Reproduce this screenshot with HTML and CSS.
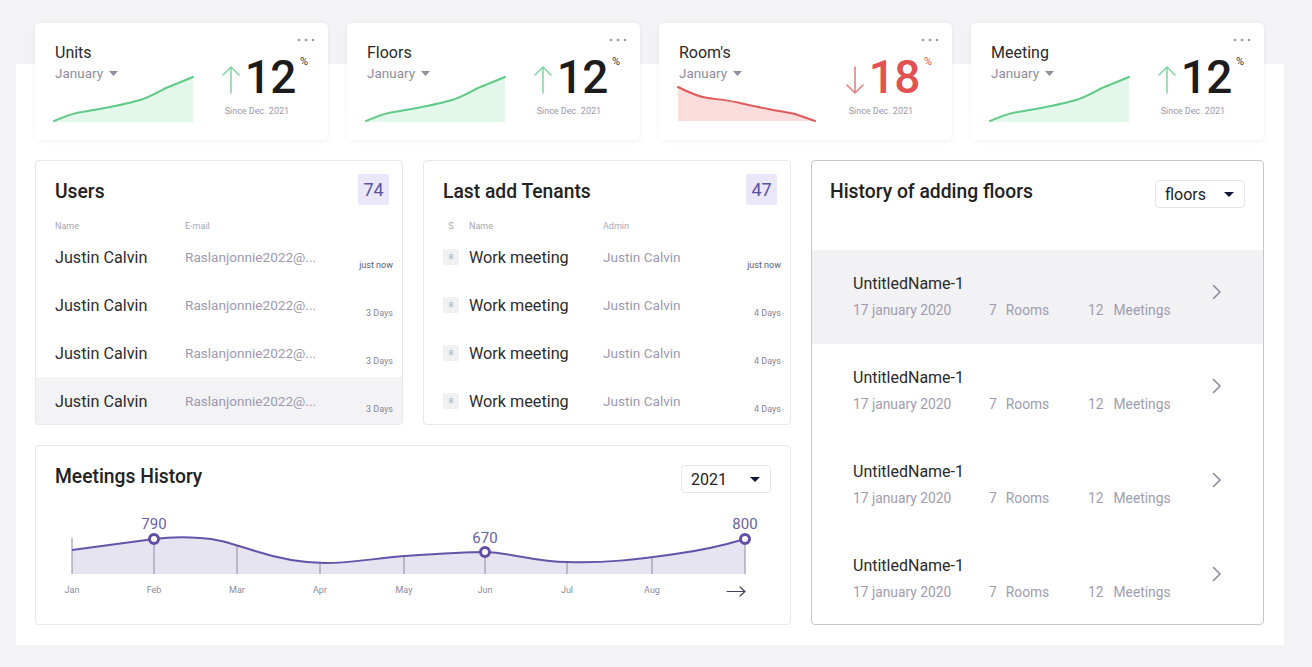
FILE: index.html
```html
<!DOCTYPE html>
<html lang="en">
<head>
<meta charset="utf-8">
<title>Dashboard</title>
<link rel="stylesheet" href="styles.css">
</head>
<body>
<div class="panel">
  <div class="stats">
    <div class="stat">
      <svg class="dots" width="18" height="4" viewBox="0 0 18 4"><circle cx="2" cy="2" r="1.3"/><circle cx="9" cy="2" r="1.3"/><circle cx="16" cy="2" r="1.3"/></svg>
      <div class="stat-left">
        <div class="stat-title">Units</div>
        <div class="stat-month">January <svg class="caret" width="9" height="5" viewBox="0 0 9 5"><path d="M0 0h9L4.5 5z"/></svg></div>
        <svg class="spark" width="139" height="45" viewBox="0 0 139 45"><path class="fill-g" d="M0,44 C10,40 18,36 28,35 C45,32 70,28 86,23 C96,20 104,15 112,11 L139,0 L139,45 L0,45 Z"/><path class="line-g" d="M0,44 C10,40 18,36 28,35 C45,32 70,28 86,23 C96,20 104,15 112,11 L139,0"/></svg>
      </div>
      <div class="stat-right">
        <div class="stat-value">
          <svg class="arrow up" width="18" height="28" viewBox="0 0 18 28"><path d="M9 27V1M1 9l8-8 8 8"/></svg>
          <span class="num">12</span><span class="pct">%</span>
        </div>
        <div class="since">Since Dec. 2021</div>
      </div>
    </div>
    <div class="stat">
      <svg class="dots" width="18" height="4" viewBox="0 0 18 4"><circle cx="2" cy="2" r="1.3"/><circle cx="9" cy="2" r="1.3"/><circle cx="16" cy="2" r="1.3"/></svg>
      <div class="stat-left">
        <div class="stat-title">Floors</div>
        <div class="stat-month">January <svg class="caret" width="9" height="5" viewBox="0 0 9 5"><path d="M0 0h9L4.5 5z"/></svg></div>
        <svg class="spark" width="139" height="45" viewBox="0 0 139 45"><path class="fill-g" d="M0,44 C10,40 18,36 28,35 C45,32 70,28 86,23 C96,20 104,15 112,11 L139,0 L139,45 L0,45 Z"/><path class="line-g" d="M0,44 C10,40 18,36 28,35 C45,32 70,28 86,23 C96,20 104,15 112,11 L139,0"/></svg>
      </div>
      <div class="stat-right">
        <div class="stat-value">
          <svg class="arrow up" width="18" height="28" viewBox="0 0 18 28"><path d="M9 27V1M1 9l8-8 8 8"/></svg>
          <span class="num">12</span><span class="pct">%</span>
        </div>
        <div class="since">Since Dec. 2021</div>
      </div>
    </div>
    <div class="stat">
      <svg class="dots" width="18" height="4" viewBox="0 0 18 4"><circle cx="2" cy="2" r="1.3"/><circle cx="9" cy="2" r="1.3"/><circle cx="16" cy="2" r="1.3"/></svg>
      <div class="stat-left">
        <div class="stat-title">Room's</div>
        <div class="stat-month">January <svg class="caret" width="9" height="5" viewBox="0 0 9 5"><path d="M0 0h9L4.5 5z"/></svg></div>
        <svg class="spark" width="139" height="45" viewBox="0 0 139 45"><path class="fill-r" d="M0,10 C10,15 20,20 30,21 C45,23 55,24 62,26 C75,29 85,31 95,33 C105,35 115,36 120,38 L137,44 L0,44 Z"/><path class="line-r" d="M0,10 C10,15 20,20 30,21 C45,23 55,24 62,26 C75,29 85,31 95,33 C105,35 115,36 120,38 L137,44"/></svg>
      </div>
      <div class="stat-right">
        <div class="stat-value">
          <svg class="arrow down" width="18" height="28" viewBox="0 0 18 28"><path d="M9 1v26M1 19l8 8 8-8"/></svg>
          <span class="num red">18</span><span class="pct red">%</span>
        </div>
        <div class="since">Since Dec. 2021</div>
      </div>
    </div>
    <div class="stat">
      <svg class="dots" width="18" height="4" viewBox="0 0 18 4"><circle cx="2" cy="2" r="1.3"/><circle cx="9" cy="2" r="1.3"/><circle cx="16" cy="2" r="1.3"/></svg>
      <div class="stat-left">
        <div class="stat-title">Meeting</div>
        <div class="stat-month">January <svg class="caret" width="9" height="5" viewBox="0 0 9 5"><path d="M0 0h9L4.5 5z"/></svg></div>
        <svg class="spark" width="139" height="45" viewBox="0 0 139 45"><path class="fill-g" d="M0,44 C10,40 18,36 28,35 C45,32 70,28 86,23 C96,20 104,15 112,11 L139,0 L139,45 L0,45 Z"/><path class="line-g" d="M0,44 C10,40 18,36 28,35 C45,32 70,28 86,23 C96,20 104,15 112,11 L139,0"/></svg>
      </div>
      <div class="stat-right">
        <div class="stat-value">
          <svg class="arrow up" width="18" height="28" viewBox="0 0 18 28"><path d="M9 27V1M1 9l8-8 8 8"/></svg>
          <span class="num">12</span><span class="pct">%</span>
        </div>
        <div class="since">Since Dec. 2021</div>
      </div>
    </div>
  </div>

  <div class="grid">
    <div class="card users">
      <div class="card-head">
        <div class="card-title">Users</div>
        <div class="badge">74</div>
      </div>
      <div class="thead users-cols"><span>Name</span><span>E-mail</span><span></span></div>
      <div class="trow users-cols"><span class="name">Justin Calvin</span><span class="muted">Raslanjonnie2022@...</span><span class="ts now">just now</span></div>
      <div class="trow users-cols"><span class="name">Justin Calvin</span><span class="muted">Raslanjonnie2022@...</span><span class="ts">3 Days</span></div>
      <div class="trow users-cols"><span class="name">Justin Calvin</span><span class="muted">Raslanjonnie2022@...</span><span class="ts">3 Days</span></div>
      <div class="trow users-cols active"><span class="name">Justin Calvin</span><span class="muted">Raslanjonnie2022@...</span><span class="ts">3 Days</span></div>
    </div>

    <div class="card tenants">
      <div class="card-head">
        <div class="card-title">Last add Tenants</div>
        <div class="badge">47</div>
      </div>
      <div class="thead ten-cols"><span class="s-head">S</span><span>Name</span><span>Admin</span><span></span></div>
      <div class="trow ten-cols"><span class="sbox">8</span><span class="name">Work meeting</span><span class="muted">Justin Calvin</span><span class="ts now">just now</span></div>
      <div class="trow ten-cols"><span class="sbox">8</span><span class="name">Work meeting</span><span class="muted">Justin Calvin</span><span class="ts">4 Days</span></div>
      <div class="trow ten-cols"><span class="sbox">8</span><span class="name">Work meeting</span><span class="muted">Justin Calvin</span><span class="ts">4 Days</span></div>
      <div class="trow ten-cols"><span class="sbox">8</span><span class="name">Work meeting</span><span class="muted">Justin Calvin</span><span class="ts">4 Days</span></div>
    </div>

    <div class="card floors">
      <div class="card-head floors-head">
        <div class="card-title">History of adding floors</div>
        <div class="select">floors <svg width="10" height="5" viewBox="0 0 10 5"><path d="M0 0h10L5 5z"/></svg></div>
      </div>
      <div class="floor-list">
        <div class="floor active">
          <div class="floor-info">
            <div class="floor-name">UntitledName-1</div>
            <div class="floor-meta"><span class="date">17 january 2020</span><span class="rooms"><b>7</b>Rooms</span><span class="meet"><b>12</b>Meetings</span></div>
          </div>
          <svg class="chev" width="10" height="16" viewBox="0 0 10 16"><path d="M1.5 1.5L8 8l-6.5 6.5"/></svg>
        </div>
        <div class="floor">
          <div class="floor-info">
            <div class="floor-name">UntitledName-1</div>
            <div class="floor-meta"><span class="date">17 january 2020</span><span class="rooms"><b>7</b>Rooms</span><span class="meet"><b>12</b>Meetings</span></div>
          </div>
          <svg class="chev" width="10" height="16" viewBox="0 0 10 16"><path d="M1.5 1.5L8 8l-6.5 6.5"/></svg>
        </div>
        <div class="floor">
          <div class="floor-info">
            <div class="floor-name">UntitledName-1</div>
            <div class="floor-meta"><span class="date">17 january 2020</span><span class="rooms"><b>7</b>Rooms</span><span class="meet"><b>12</b>Meetings</span></div>
          </div>
          <svg class="chev" width="10" height="16" viewBox="0 0 10 16"><path d="M1.5 1.5L8 8l-6.5 6.5"/></svg>
        </div>
        <div class="floor">
          <div class="floor-info">
            <div class="floor-name">UntitledName-1</div>
            <div class="floor-meta"><span class="date">17 january 2020</span><span class="rooms"><b>7</b>Rooms</span><span class="meet"><b>12</b>Meetings</span></div>
          </div>
          <svg class="chev" width="10" height="16" viewBox="0 0 10 16"><path d="M1.5 1.5L8 8l-6.5 6.5"/></svg>
        </div>
      </div>
    </div>

    <div class="card meetings">
      <div class="card-head meet-head">
        <div class="card-title">Meetings History</div>
        <div class="select">2021 <svg width="10" height="5" viewBox="0 0 10 5"><path d="M0 0h10L5 5z"/></svg></div>
      </div>
      <svg class="chart" width="716" height="92" viewBox="0 0 716 92">
        <path class="area" d="M17,45 L99,34 C115,32 130,32 145,33 C165,34 180,40 200,46 C225,54 245,58 270,58 C300,58 320,53 350,51 C380,49 410,47 430,47 C460,48 480,57 512,57 C550,58 580,55 620,49 C650,45 670,40 690,34 L690,69 L17,69 Z"/>
        <g class="grid-lines">
          <line x1="17" y1="33" x2="17" y2="69"/>
          <line x1="99" y1="34" x2="99" y2="69"/>
          <line x1="182" y1="40" x2="182" y2="69"/>
          <line x1="265" y1="58" x2="265" y2="69"/>
          <line x1="349" y1="51" x2="349" y2="69"/>
          <line x1="430" y1="47" x2="430" y2="69"/>
          <line x1="512" y1="57" x2="512" y2="69"/>
          <line x1="597" y1="53" x2="597" y2="69"/>
          <line x1="690" y1="34" x2="690" y2="69"/>
        </g>
        <path class="curve" d="M17,45 L99,34 C115,32 130,32 145,33 C165,34 180,40 200,46 C225,54 245,58 270,58 C300,58 320,53 350,51 C380,49 410,47 430,47 C460,48 480,57 512,57 C550,58 580,55 620,49 C650,45 670,40 690,34"/>
        <circle class="pt" cx="99" cy="34" r="4.5"/>
        <circle class="pt" cx="430" cy="47" r="4.5"/>
        <circle class="pt" cx="690" cy="34" r="4.5"/>
        <g class="val">
          <text x="99" y="24">790</text>
          <text x="430" y="38">670</text>
          <text x="690" y="24">800</text>
        </g>
        <g class="months">
          <text x="17" y="88">Jan</text>
          <text x="99" y="88">Feb</text>
          <text x="182" y="88">Mar</text>
          <text x="265" y="88">Apr</text>
          <text x="349" y="88">May</text>
          <text x="430" y="88">Jun</text>
          <text x="512" y="88">Jul</text>
          <text x="597" y="88">Aug</text>
        </g>
        <path class="next" d="M672,86.5h18M685,82l5,4.5-5,4.5"/>
      </svg>
    </div>
  </div>
</div>
</body>
</html>
```
FILE: styles.css
```css
* { box-sizing: border-box; }
html, body { margin: 0; padding: 0; }
body {
  background: #f3f3f5;
  font-family: Roboto, "Liberation Sans", Arial, sans-serif;
  color: #222;
  width: 1312px;
  height: 667px;
  overflow: hidden;
}
.panel {
  width: 1268px;
  margin: 64px 0 0 16px;
  background: #fff;
  padding: 0 20px 20px 19px;
  display: flex;
  flex-direction: column;
}
.stats {
  display: flex;
  gap: 19px;
  margin-top: -41px;
  margin-bottom: 20px;
}
.stat {
  position: relative;
  width: 293px;
  height: 117px;
  background: #fff;
  border-radius: 5px;
  box-shadow: 0 1px 6px rgba(30, 30, 60, 0.06);
  display: flex;
  padding: 20px 20px 0 19px;
}
.dots {
  position: absolute;
  top: 15px;
  right: 13px;
  fill: #9a99a6;
}
.stat-left {
  width: 139px;
  display: flex;
  flex-direction: column;
}
.stat-title {
  font-size: 16px;
  line-height: 19px;
  color: #2a2a2a;
  padding-left: 1px;
}
.stat-month {
  margin-top: 3px;
  font-size: 13.5px;
  line-height: 16px;
  color: #8f8d9b;
  display: flex;
  align-items: center;
  gap: 6px;
  padding-left: 1px;
}
.caret { fill: #8f8d9b; margin-top: 1px; }
.spark { display: block; margin-top: -4px; overflow: visible; }
.fill-g { fill: #e4f7eb; }
.line-g { fill: none; stroke: #5fcb86; stroke-width: 2; stroke-linecap: round; }
.fill-r { fill: #fbdcdc; }
.line-r { fill: none; stroke: #e05a5a; stroke-width: 2; stroke-linecap: round; }

.stat-right {
  margin-left: auto;
  padding-top: 11px;
  display: flex;
  flex-direction: column;
}
.stat-value {
  display: flex;
  align-items: flex-start;
}
.arrow {
  margin-top: 12px;
  margin-right: 5px;
  fill: none;
  stroke-width: 1.5;
  stroke-linecap: round;
  stroke-linejoin: round;
}
.arrow.up { stroke: #7ed6a1; }
.arrow.down { stroke: #e57b7b; }
.num {
  font-size: 46px;
  line-height: 46px;
  font-weight: 500;
  color: #1c1c1c;
  letter-spacing: -0.5px;
}
.pct {
  font-size: 11px;
  line-height: 11px;
  margin-left: 4px;
  margin-top: 2px;
  color: #333;
}
.red { color: #e25252; }
.since {
  margin-top: 6px;
  font-size: 9px;
  line-height: 11px;
  color: #9a98ab;
  padding-left: 3px;
}

.grid {
  display: grid;
  grid-template-columns: 368px 368px 453px;
  grid-template-rows: 265px 180px;
  gap: 20px;
}
.card {
  background: #fff;
  border: 1px solid #e6e6eb;
  border-radius: 4px;
  overflow: hidden;
}
.card-head {
  display: flex;
  justify-content: space-between;
  align-items: flex-start;
  padding: 13px 13px 0 19px;
}
.card-title {
  font-size: 19.3px;
  line-height: 22px;
  font-weight: 500;
  color: #222;
  margin-top: 7px;
}
.badge {
  width: 31px;
  height: 31px;
  background: #e9e7f9;
  color: #5a51a0;
  font-size: 18px;
  line-height: 31px;
  text-align: center;
  border-radius: 2px;
}
.thead {
  margin-top: 14px;
  height: 14px;
  font-size: 9px;
  line-height: 14px;
  color: #a8a6b6;
}
.trow {
  height: 48px;
  align-items: center;
}
.users-cols {
  display: grid;
  grid-template-columns: 120px 1fr auto;
  column-gap: 10px;
  padding: 0 9px 0 19px;
}
.ten-cols {
  display: grid;
  grid-template-columns: 16px 124px 1fr auto;
  column-gap: 10px;
  padding: 0 9px 0 19px;
}
.trow .name { font-size: 16.2px; color: #2c2c2c; }
.trow .muted { font-size: 13.6px; color: #9c99af; white-space: nowrap; }
.trow .ts {
  font-size: 9px;
  color: #85859a;
  align-self: end;
  padding-bottom: 11px;
}
.trow .ts.now { color: #56597c; }
.trow.active { background: #f3f3f6; }
.s-head { text-align: center; }
.sbox {
  width: 16px;
  height: 16px;
  background: #f1f1f4;
  color: #a3a2b0;
  font-size: 8px;
  line-height: 16px;
  text-align: center;
  border-radius: 2px;
}

.floors {
  grid-column: 3;
  grid-row: 1 / 3;
  border-color: #c8c7cf;
}
.floors-head {
  padding: 19px 18px 0 18px;
}
.floors-head .card-title { margin-top: 1px; }
.select {
  width: 90px;
  height: 28px;
  border: 1px solid #e4e4ea;
  border-radius: 4px;
  display: flex;
  align-items: center;
  justify-content: space-between;
  padding: 0 10px 0 9px;
  font-size: 16px;
  color: #222;
}
.select svg { fill: #15163a; }
.floor-list { margin-top: 42px; }
.floor {
  height: 94px;
  display: flex;
  align-items: flex-start;
  padding: 24px 41px 0 41px;
}
.floor.active { background: #f2f2f5; }
.floor-info { flex: 1; }
.floor-name {
  font-size: 16px;
  line-height: 20px;
  color: #2a2a2a;
}
.floor-meta {
  margin-top: 8px;
  font-size: 13.8px;
  line-height: 17px;
  color: #9f9cb0;
  display: flex;
}
.floor-meta .date { width: 136px; }
.floor-meta .rooms { width: 99px; }
.floor-meta b { font-weight: 400; margin-right: 9px; }
.floor-meta .meet b { margin-right: 10px; }
.chev {
  margin-top: 10px;
  fill: none;
  stroke: #8c8a9a;
  stroke-width: 1.6;
  stroke-linecap: round;
  stroke-linejoin: round;
}

.meetings {
  grid-column: 1 / 3;
  grid-row: 2;
}
.meet-head {
  padding: 19px 19px 0 19px;
}
.meet-head .card-title { margin-top: 1px; }
.chart {
  display: block;
  margin: 12px 0 0 19px;
}
.area { fill: #e7e4f1; }
.curve { fill: none; stroke: #6453a8; stroke-width: 2; }
.grid-lines line { stroke: #8e8b9f; stroke-width: 1; }
.pt { fill: #fff; stroke: #5f4fa6; stroke-width: 3; }
.val text {
  font-family: Roboto, "Liberation Sans", sans-serif;
  font-size: 15px;
  fill: #6a61a6;
  text-anchor: middle;
}
.months text {
  font-family: Roboto, "Liberation Sans", sans-serif;
  font-size: 9px;
  fill: #8c8a9c;
  text-anchor: middle;
}
.next { fill: none; stroke: #444460; stroke-width: 1.2; stroke-linecap: round; stroke-linejoin: round; }
```
